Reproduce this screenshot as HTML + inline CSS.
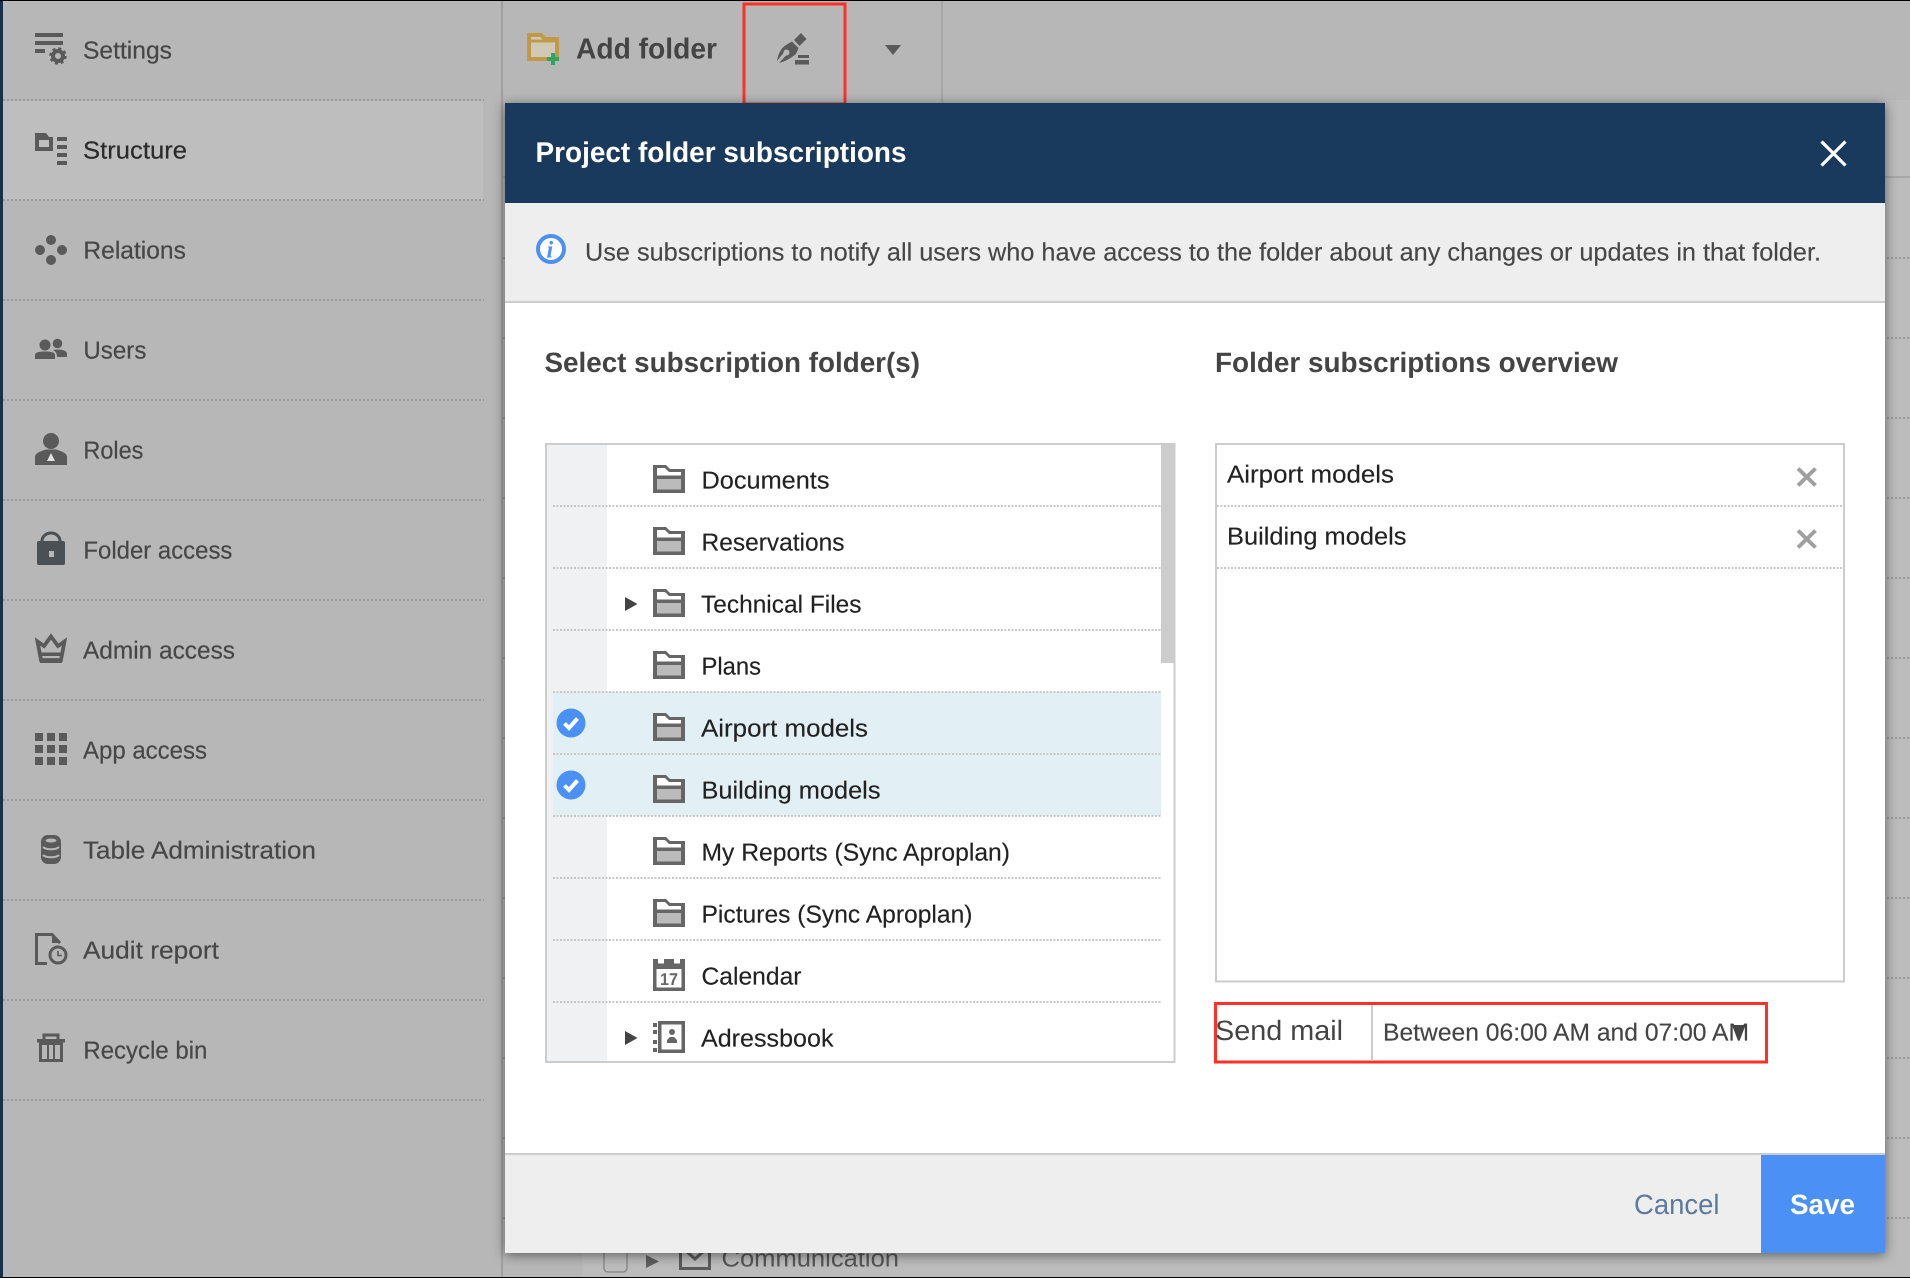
<!DOCTYPE html>
<html lang="en">
<head>
<meta charset="utf-8">
<title>Project folder subscriptions</title>
<style>
html,body{margin:0;padding:0;background:#b7b7b7;width:1910px;height:1278px;overflow:hidden}
svg{display:block}
text{font-family:"Liberation Sans",sans-serif;text-rendering:geometricPrecision;transform:translateY(-.6px)}
.nav{font-size:24.5px;fill:#474747;stroke:#474747;stroke-width:.2px}
.li{font-size:24.5px;fill:#222;stroke:#222;stroke-width:.15px}
.h{font-size:28px;font-weight:bold;fill:#444}
.ic{fill:#5a5a5a}
</style>
</head>
<body>
<svg xmlns="http://www.w3.org/2000/svg" width="1910" height="1278" viewBox="0 0 1910 1278">
<defs>
<filter id="sh" x="-5%" y="-5%" width="110%" height="110%"><feDropShadow dx="0" dy="2" stdDeviation="6" flood-color="#000" flood-opacity=".5"/></filter>
<g id="fld">
<path d="M0 0H13L17 4H32V28H0Z" fill="#666"/>
<path d="M4 3H12L16 7H28V10.5H4Z" fill="#fff"/>
<rect x="4" y="14" width="24" height="10.5" fill="#bbb"/>
</g>
<g id="tri"><path d="M0 0L12.5 7L0 14Z" fill="#444"/></g>
<g id="chk"><circle r="14.5" fill="#4a90f5"/><path d="M-6.5 0.5L-2 5L6.5 -4.5" fill="none" stroke="#fff" stroke-width="4"/></g>
</defs>

<!-- page background -->
<rect width="1910" height="1278" fill="#b7b7b7"/>
<rect x="582" y="1230" width="1328" height="48" fill="#bcbcbc"/>
<rect x="1885" y="100" width="25" height="1178" fill="#bcbcbc"/>

<!-- sidebar -->
<rect x="3" y="101" width="480" height="99" fill="#bebebe"/>
<rect x="0" y="0" width="3" height="1278" fill="#17304d"/>
<g stroke="#9a9a9a" stroke-width="2" stroke-dasharray="2 2" fill="none">
<path d="M3 100H484M3 200H484M3 300H484M3 400H484M3 500H484M3 600H484M3 700H484M3 800H484M3 900H484M3 1000H484M3 1100H484"/>
</g>
<rect x="501" y="0" width="2" height="1278" fill="#a0a0a0"/>
<rect x="941" y="0" width="2" height="103" fill="#a6a6a6"/>

<text class="nav" x="83" y="59" textLength="89" lengthAdjust="spacingAndGlyphs">Settings</text>
<text class="nav" x="83" y="159" textLength="104" lengthAdjust="spacingAndGlyphs" style="fill:#2b2b2b;stroke:#2b2b2b">Structure</text>
<text class="nav" x="83.400" y="259" textLength="102.500" lengthAdjust="spacingAndGlyphs">Relations</text>
<text class="nav" x="83.400" y="359" textLength="63" lengthAdjust="spacingAndGlyphs">Users</text>
<text class="nav" x="83.400" y="459" textLength="60" lengthAdjust="spacingAndGlyphs">Roles</text>
<text class="nav" x="83.400" y="559" textLength="149" lengthAdjust="spacingAndGlyphs">Folder access</text>
<text class="nav" x="83" y="659" textLength="152" lengthAdjust="spacingAndGlyphs">Admin access</text>
<text class="nav" x="83" y="759" textLength="124" lengthAdjust="spacingAndGlyphs">App access</text>
<text class="nav" x="83" y="859" textLength="233" lengthAdjust="spacingAndGlyphs">Table Administration</text>
<text class="nav" x="83" y="959" textLength="136" lengthAdjust="spacingAndGlyphs">Audit report</text>
<text class="nav" x="83.400" y="1059" textLength="124" lengthAdjust="spacingAndGlyphs">Recycle bin</text>

<!-- sidebar icons -->
<g class="ic">
<!-- settings -->
<rect x="35" y="33" width="28" height="4"/><rect x="35" y="41" width="28" height="4"/><rect x="35" y="49" width="10" height="4"/>
<circle cx="58" cy="56" r="5" fill="none" stroke="#5a5a5a" stroke-width="4"/>
<circle cx="58" cy="56" r="7.5" fill="none" stroke="#5a5a5a" stroke-width="2.5" stroke-dasharray="3 2.9"/>
<!-- structure -->
<path fill-rule="evenodd" d="M35 133H46L49 137H53V151H35ZM39 140V147H49V140Z"/>
<rect x="57" y="137" width="10" height="4"/><rect x="57" y="145" width="10" height="4"/><rect x="57" y="153" width="10" height="4"/><rect x="57" y="161" width="10" height="4"/>
<!-- relations -->
<circle cx="51" cy="240" r="5"/><circle cx="40" cy="250" r="5"/><circle cx="62" cy="250" r="5"/><circle cx="51" cy="260" r="5"/>
<!-- users -->
<circle cx="45" cy="345" r="5.5"/><circle cx="57.5" cy="343.5" r="4.8"/>
<path d="M35 359V355C35 352 40 351.5 45 351.5C50 351.5 55 352 55 355V359Z"/>
<path d="M53 350C55 349.5 56 349.5 58 349.5C63 349.5 67 351 67 354V357H57C57 353 55.500 351.500 53 350Z"/>
<!-- roles -->
<circle cx="51" cy="441" r="8"/>
<path d="M35 465V457C35 453 41 451 46 449.500H56C61 451 67 453 67 457V465Z"/>
<path d="M51 453L55 461H47Z" fill="#e2e2e2"/>
<!-- folder access -->
<path d="M42 541A9 8 0 0 1 60 541" fill="none" stroke="#4b5054" stroke-width="3"/>
<rect x="37" y="541" width="28" height="24" rx="2" fill="#4b5054"/>
<rect x="49" y="551" width="5" height="6" fill="#b7b7b7"/>
<!-- admin access -->
<path d="M51 636.500L58 646L64.500 641.500L61 660H41L37.500 641.500L44 646Z" fill="none" stroke="#5a5a5a" stroke-width="3.800"/>
<rect x="41" y="652.500" width="20" height="3.500"/>
<rect x="40" y="659" width="22" height="4"/>
<!-- app access -->
<rect x="35" y="733" width="8" height="8"/><rect x="47" y="733" width="8" height="8"/><rect x="59" y="733" width="8" height="8"/>
<rect x="35" y="745" width="8" height="8"/><rect x="47" y="745" width="8" height="8"/><rect x="59" y="745" width="8" height="8"/>
<rect x="35" y="757" width="8" height="8"/><rect x="47" y="757" width="8" height="8"/><rect x="59" y="757" width="8" height="8"/>
<!-- table -->
<rect x="41" y="835" width="20" height="29" rx="7"/>
<ellipse cx="51" cy="840.500" rx="5.500" ry="2" fill="#b7b7b7"/>
<path d="M43 847C46 850 56 850 59 847M43 855C46 858 56 858 59 855" fill="none" stroke="#b7b7b7" stroke-width="2"/>
<!-- audit -->
<path d="M47 963.500H36.500V934.500H52L60 943" fill="none" stroke="#5a5a5a" stroke-width="3"/>
<path d="M52 935V943H60Z"/>
<circle cx="58" cy="955" r="8" fill="none" stroke="#5a5a5a" stroke-width="3"/>
<path d="M58 951V955.500H62" fill="none" stroke="#5a5a5a" stroke-width="1.600"/>
<!-- recycle -->
<path d="M44 1039V1035H58V1039" fill="none" stroke="#5a5a5a" stroke-width="3"/>
<rect x="37" y="1039" width="28" height="3.500"/>
<path fill-rule="evenodd" d="M39 1042H63V1062H39ZM42 1045V1059H47V1045ZM49 1045V1059H53V1045ZM55 1045V1059H60V1045Z"/>
</g>

<!-- toolbar -->
<path d="M529 35H541L545 39H557V59H529Z" fill="#cfc9b8" stroke="#c29a45" stroke-width="4"/>
<path d="M529 41H557" stroke="#c29a45" stroke-width="3"/>
<rect x="547" y="57" width="12" height="4" fill="#2fa65f"/><rect x="551" y="53" width="4" height="12" fill="#2fa65f"/>
<text x="576" y="59" font-size="29" font-weight="bold" fill="#444" textLength="141" lengthAdjust="spacingAndGlyphs">Add folder</text>
<g fill="#5a5a5a">
<path d="M801 33L806.500 39L799.500 46L794 40Z"/>
<path fill-rule="evenodd" d="M792 41.500L798.500 48L796 54C791 58 786 61 779 63L786 55.500A3 3 0 1 0 783.500 53L777 61C778 54 781 48 786 45Z"/>
<rect x="798" y="55" width="11" height="3"/><rect x="795" y="60" width="14" height="4.500"/>
</g>
<path d="M885 45H901L893 55Z" fill="#5a5a5a"/>
<rect x="744" y="4" width="101" height="100" fill="none" stroke="#ff3126" stroke-width="3"/>

<!-- background row -->
<rect x="604" y="1230" width="23" height="42" rx="4" fill="none" stroke="#8b8b8b" stroke-width="1.500"/>
<path d="M646 1255L659 1261.500L646 1268Z" fill="#5f5f5f"/>
<path d="M680.500 1230H709.500V1268.500H680.500Z" fill="none" stroke="#5a5a5a" stroke-width="3"/>
<path d="M685 1250L695 1259L705 1250" fill="none" stroke="#5a5a5a" stroke-width="3"/>
<text x="721.500" y="1267" font-size="24.5" fill="#555" textLength="177.500" lengthAdjust="spacingAndGlyphs">Communication</text>
<g stroke="#9a9a9a" stroke-width="2" stroke-dasharray="2 2" fill="none">
<path d="M503 258H1910M503 338H1910M503 418H1910M503 498H1910M503 578H1910M503 658H1910M503 738H1910M503 818H1910M503 898H1910M503 978H1910M503 1058H1910M503 1138H1910M503 1218H1910"/>
</g>
<path d="M503 177H1910" stroke="#a8a8a8" stroke-width="2"/>

<!-- modal -->
<rect x="505" y="103" width="1380" height="1150" fill="#fff" filter="url(#sh)"/>
<rect x="505" y="103" width="1380" height="100" fill="#193a5c"/>
<text x="535.500" y="162.800" font-size="28.500" font-weight="bold" fill="#fff" textLength="371" lengthAdjust="spacingAndGlyphs">Project folder subscriptions</text>
<path d="M1821.500 141.500L1845.500 165.500M1845.500 141.500L1821.500 165.500" stroke="#fff" stroke-width="3.200" fill="none"/>
<rect x="505" y="203" width="1380" height="98" fill="#eee"/>
<rect x="505" y="301" width="1380" height="2" fill="#ccc"/>
<circle cx="551" cy="249" r="13" fill="#fff" stroke="#4a90f5" stroke-width="4"/>
<text x="546.500" y="258" font-size="24" font-weight="bold" font-style="italic" fill="#4a90f5" style="font-family:'Liberation Serif',serif">i</text>
<text x="585" y="261" font-size="25" fill="#474747" stroke="#474747" stroke-width=".15" textLength="1236" lengthAdjust="spacingAndGlyphs">Use subscriptions to notify all users who have access to the folder about any changes or updates in that folder.</text>

<text class="h" x="544.500" y="372.500" textLength="375.500" lengthAdjust="spacingAndGlyphs">Select subscription folder(s)</text>
<text class="h" x="1215" y="372.500" textLength="403" lengthAdjust="spacingAndGlyphs">Folder subscriptions overview</text>

<!-- tree list -->
<rect x="547" y="444" width="60" height="618" fill="#f0f1f2"/>
<rect x="553" y="692" width="608" height="124" fill="#e2f0f5"/>
<rect x="546" y="444" width="628.500" height="618" fill="none" stroke="#ccc" stroke-width="2"/>
<rect x="1161" y="445" width="13" height="218" fill="#ccc"/>
<g stroke="#c8c8c8" stroke-width="2" stroke-dasharray="2 1.500" fill="none">
<path d="M553 506H1161M553 568H1161M553 630H1161M553 692H1161M553 754H1161M553 816H1161M553 878H1161M553 940H1161M553 1002H1161"/>
</g>

<use href="#fld" x="653" y="465"/>
<use href="#fld" x="653" y="527"/>
<use href="#fld" x="653" y="589"/>
<use href="#fld" x="653" y="651"/>
<use href="#fld" x="653" y="713"/>
<use href="#fld" x="653" y="775"/>
<use href="#fld" x="653" y="837"/>
<use href="#fld" x="653" y="899"/>
<use href="#tri" x="625" y="597"/>
<use href="#tri" x="625" y="1031"/>
<use href="#chk" x="571" y="723"/>
<use href="#chk" x="571" y="785"/>

<!-- calendar -->
<path fill-rule="evenodd" d="M653 959H685V991H653ZM656.500 969V987.500H681.500V969ZM658 959V963.500H664V959ZM674 959V963.500H680V959Z" fill="#666"/>
<text x="660" y="985.500" font-size="17" font-weight="bold" fill="#666" textLength="18" lengthAdjust="spacingAndGlyphs">17</text>
<!-- address -->
<path fill-rule="evenodd" d="M658 1021H685V1053H658ZM661.500 1024.500V1049.500H681.500V1024.500Z" fill="#666"/>
<rect x="653" y="1023" width="4" height="4" fill="#666"/><rect x="653" y="1030" width="4" height="4" fill="#666"/><rect x="653" y="1040" width="4" height="4" fill="#666"/><rect x="653" y="1048" width="4" height="4" fill="#666"/>
<circle cx="672" cy="1032" r="3" fill="#666"/>
<path d="M667 1043V1040L670 1037H674L677 1040V1043Z" fill="#666"/>

<text class="li" x="701.500" y="489" textLength="128" lengthAdjust="spacingAndGlyphs">Documents</text>
<text class="li" x="701.500" y="551" textLength="143" lengthAdjust="spacingAndGlyphs">Reservations</text>
<text class="li" x="701" y="613" textLength="160.500" lengthAdjust="spacingAndGlyphs">Technical Files</text>
<text class="li" x="701.500" y="675" textLength="59.500" lengthAdjust="spacingAndGlyphs">Plans</text>
<text class="li" x="701" y="737" textLength="167" lengthAdjust="spacingAndGlyphs">Airport models</text>
<text class="li" x="701.500" y="799" textLength="179" lengthAdjust="spacingAndGlyphs">Building models</text>
<text class="li" x="701.500" y="861" textLength="308.500" lengthAdjust="spacingAndGlyphs">My Reports (Sync Aproplan)</text>
<text class="li" x="701.500" y="923" textLength="271" lengthAdjust="spacingAndGlyphs">Pictures (Sync Aproplan)</text>
<text class="li" x="701.500" y="985" textLength="100" lengthAdjust="spacingAndGlyphs">Calendar</text>
<text class="li" x="701" y="1047" textLength="132.500" lengthAdjust="spacingAndGlyphs">Adressbook</text>

<!-- overview list -->
<rect x="1216" y="444" width="628" height="537.500" fill="none" stroke="#ccc" stroke-width="2"/>
<g stroke="#c8c8c8" stroke-width="2" stroke-dasharray="2 1.500" fill="none"><path d="M1217 506H1843M1217 568H1843"/></g>
<text class="li" x="1227" y="483.300" textLength="167" lengthAdjust="spacingAndGlyphs">Airport models</text>
<text class="li" x="1227" y="545" textLength="179.500" lengthAdjust="spacingAndGlyphs">Building models</text>
<path d="M1798 468.500L1815.500 485.500M1815.500 468.500L1798 485.500M1798 530.500L1815.500 547.500M1815.500 530.500L1798 547.500" stroke="#a0a0a0" stroke-width="4" fill="none"/>

<!-- send mail -->
<rect x="1215.500" y="1003.500" width="551" height="58.500" fill="#fff" stroke="#ff3126" stroke-width="3"/>
<rect x="1371" y="1005" width="2" height="56" fill="#ccc"/>
<text x="1215" y="1040.800" font-size="28" fill="#444" textLength="128" lengthAdjust="spacingAndGlyphs">Send mail</text>
<text x="1383" y="1041.200" font-size="24.500" fill="#444" stroke="#444" stroke-width=".15" textLength="366" lengthAdjust="spacingAndGlyphs">Between 06:00 AM and 07:00 AM</text>
<path d="M1732 1025H1746L1739 1038Z" fill="#444"/>

<!-- footer -->
<rect x="505" y="1155" width="1380" height="98" fill="#eee"/>
<rect x="505" y="1153" width="1380" height="2" fill="#ccc"/>
<text x="1634" y="1214.500" font-size="28" fill="#5a7a9e" textLength="85.500" lengthAdjust="spacingAndGlyphs">Cancel</text>
<rect x="1761" y="1155" width="124" height="98" fill="#4a90f5"/>
<text x="1790" y="1214.500" font-size="28" font-weight="bold" fill="#fff" textLength="65" lengthAdjust="spacingAndGlyphs">Save</text>

<!-- frame lines -->
<rect x="0" y="0" width="1910" height="1" fill="#000"/>
<rect x="0" y="1277" width="1910" height="1" fill="#000"/>
</svg>
</body>
</html>
